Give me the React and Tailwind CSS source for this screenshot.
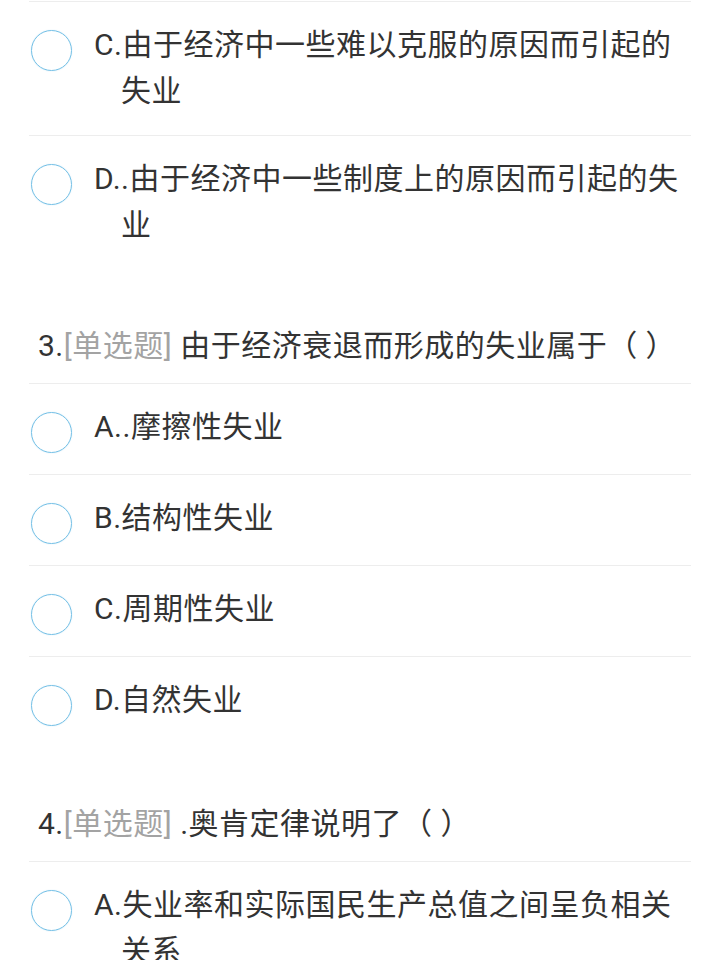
import React from "react";

// question data, copied from the screen
const groups = [
    {
        question: null,
        options: [
            {label: "C.", text: "由于经济中一些难以克服的原因而引起的", tail: "失业"},
            {label: "D..", text: "由于经济中一些制度上的原因而引起的失", tail: "业"},
        ],
    },
    {
        question: {no: "3.", text: " 由于经济衰退而形成的失业属于（ ）"},
        options: [
            {label: "A..", text: "摩擦性失业"},
            {label: "B.", text: "结构性失业"},
            {label: "C.", text: "周期性失业"},
            {label: "D.", text: "自然失业"},
        ],
    },
    {
        question: {no: "4.", text: " .奥肯定律说明了（ ）"},
        options: [
            {label: "A.", text: "失业率和实际国民生产总值之间呈负相关", tail: "关系"},
        ],
    },
];

const OptionRow = ({option, last}) => {
    return (
        <div className={"flex items-start pt-[20px] pb-[21px] " + (last ? "" : "border-b border-[#ededed]")}>
            {/* radio */}
            <div className="ml-[2px] mt-[8px] w-[41px] h-[41px] shrink-0 rounded-full border-[1.5px] border-[#74c0e6] shadow-[0_0_1px_rgba(116,192,230,0.6)]"></div>
            <div className="ml-[22px] pl-[27px] indent-[-27px] text-[30px] leading-[46px] tracking-[0.5px] text-[#333333]">
                {option.label}{option.text}
                {option.tail && <br/>}
                {option.tail}
            </div>
        </div>
    );
};

const App = () => {
    return (
        <div className="min-h-screen bg-white" style={{fontFamily: 'Roboto, "Noto Sans CJK SC", sans-serif'}}>
            <div className="mx-[29px]">
                {/* end of previous option */}
                <div className="h-[2px] border-b border-[#ededed]"></div>

                {groups.map((group, gi) => (
                    <div key={gi}>
                        {group.question && (
                            <div className="pt-[54px] pb-[14px] pl-[9px] border-b border-[#ededed] text-[30px] leading-[46px] tracking-[0.5px] text-[#333333]">
                                {group.question.no}
                                <span className="text-[#a3a3a3]">[单选题]</span>
                                {group.question.text}
                            </div>
                        )}
                        {group.options.map((option, oi) => (
                            <OptionRow key={oi} option={option} last={oi === group.options.length - 1 && gi < groups.length - 1}/>
                        ))}
                    </div>
                ))}
            </div>
        </div>
    );
};

export default App;
